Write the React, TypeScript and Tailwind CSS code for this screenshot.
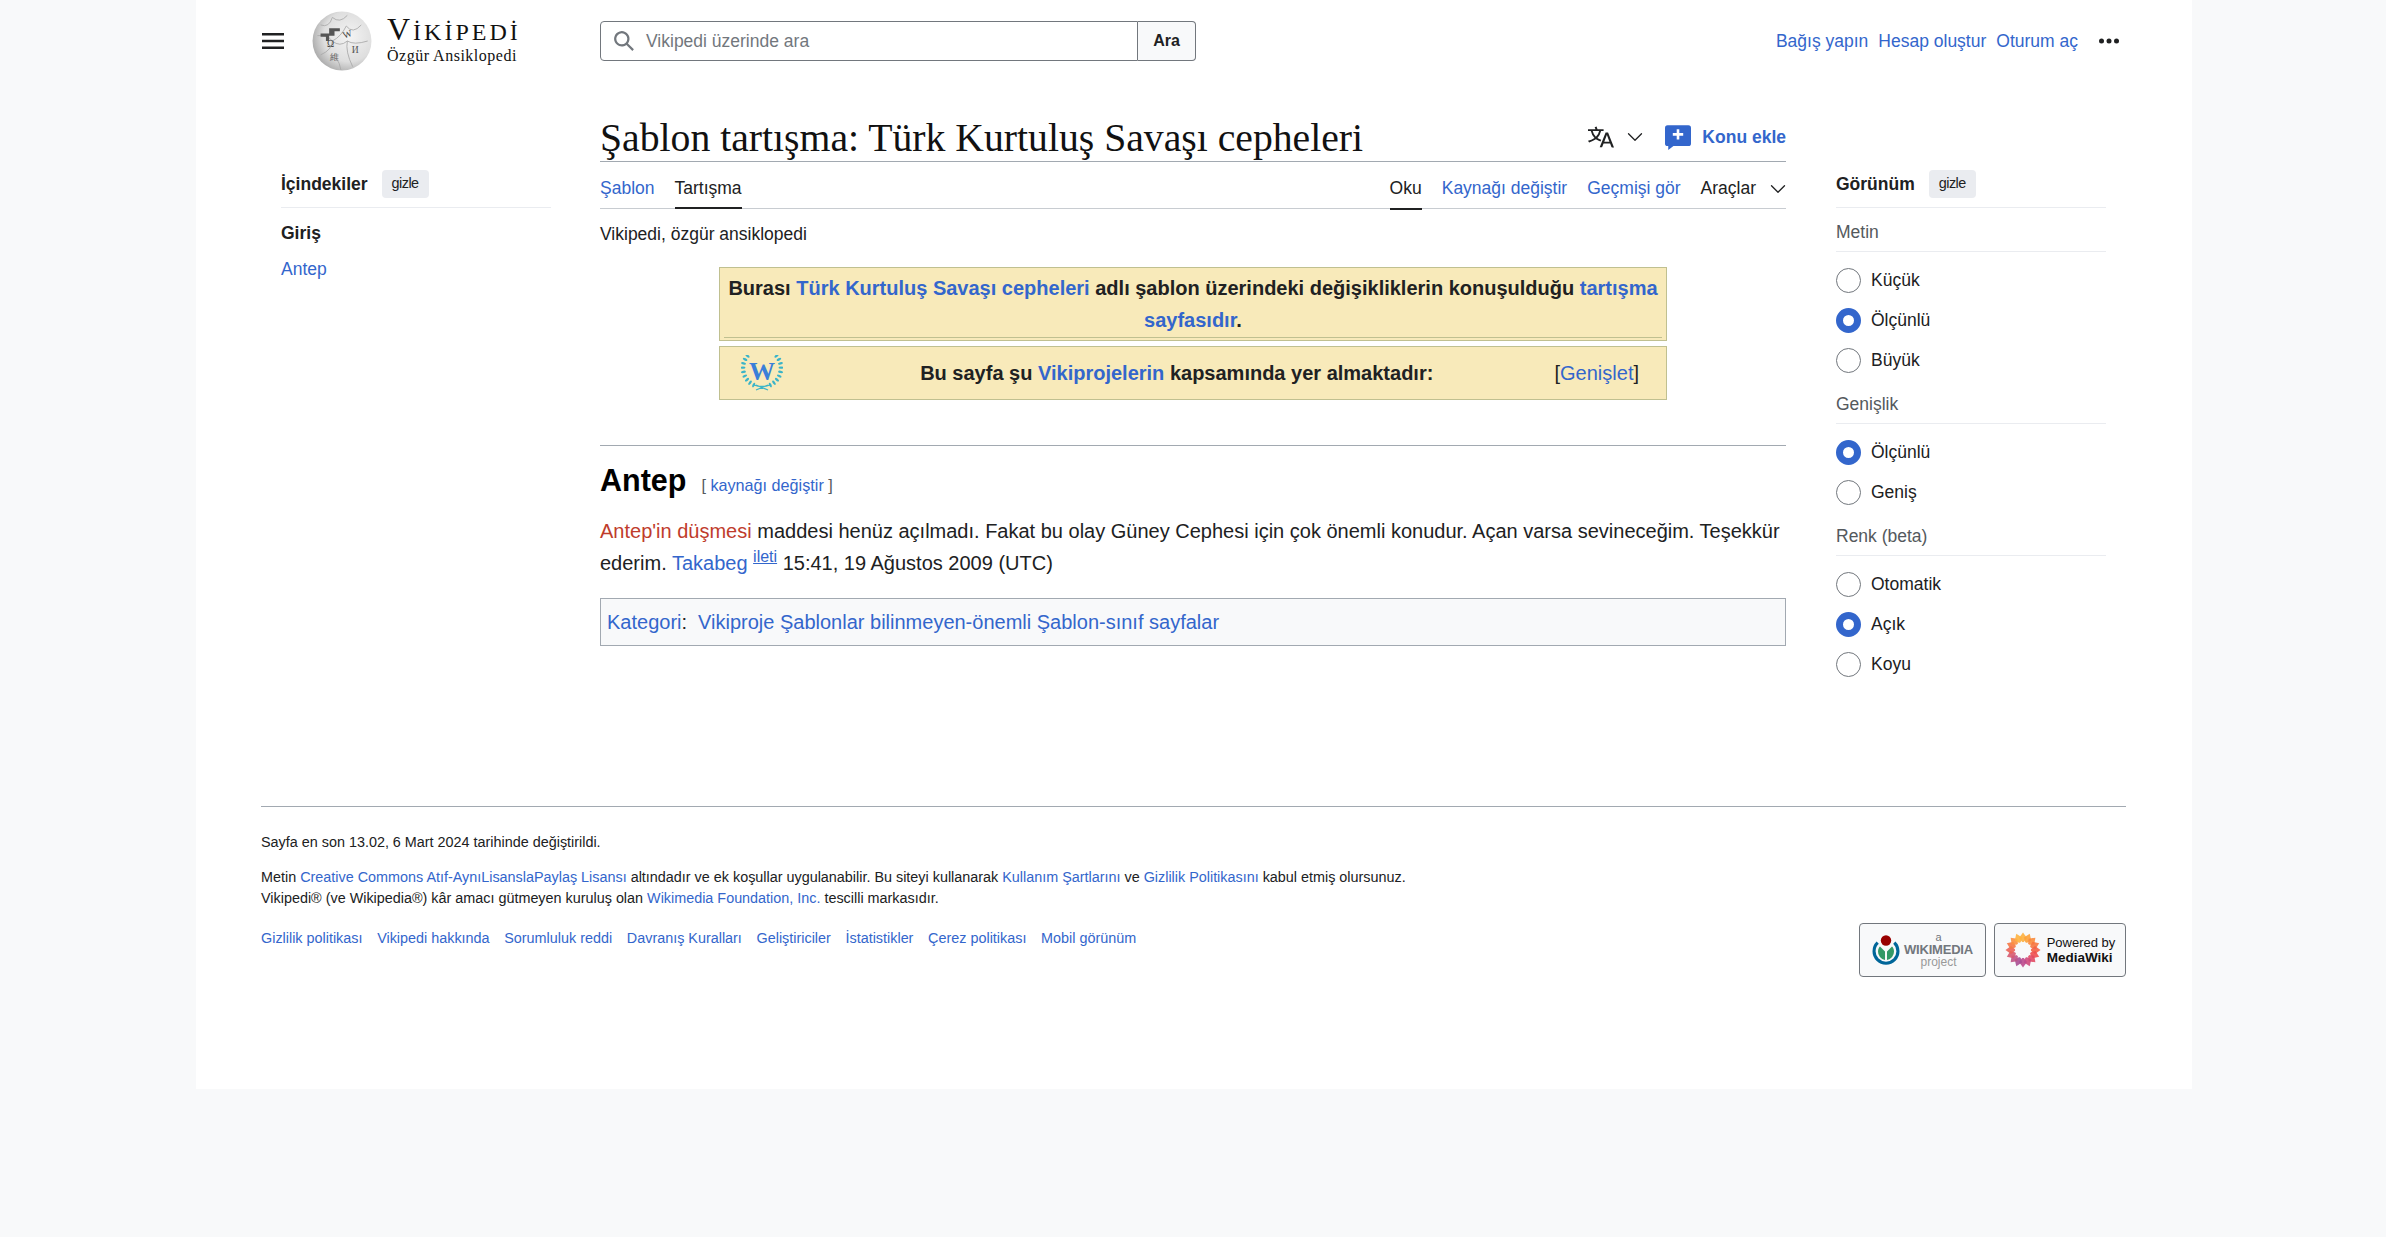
import { ChevronDown } from "lucide-react";

const link = "text-[#3366cc]";

function Globe() {
  const lines = [
    "M8 13 Q16 16 19 6",
    "M19 6 Q26 12 33 4",
    "M5 23 Q14 22 19 28 Q27 24 32 14",
    "M32 14 Q38 22 46 13",
    "M19 28 Q19 36 8 41",
    "M19 28 Q26 34 33 28 Q39 32 52 28",
    "M33 28 Q31 38 38 52",
    "M17 44 Q24 40 27 55",
  ];
  return (
    <svg width="60" height="60" viewBox="0 0 56 56" className="shrink-0">
      <defs>
        <radialGradient id="globe" cx="0.62" cy="0.42" r="0.72">
          <stop offset="0" stopColor="#f4f4f4" />
          <stop offset="0.6" stopColor="#dedede" />
          <stop offset="1" stopColor="#9a9a9a" />
        </radialGradient>
      </defs>
      <circle cx="28" cy="28" r="27.5" fill="url(#globe)" />
      {lines.map((d) => (
        <path key={d} d={d} fill="none" stroke="#a8a8a8" strokeWidth="0.8" />
      ))}
      <path d="M8 21h8v-5h10v3h-5v4h-5v5h-3v-4H8z" fill="#555" />
      <text x="14" y="34" fontSize="9" fontFamily="Liberation Serif" fill="#444">Ω</text>
      <text x="30" y="26" fontSize="9" fontFamily="Liberation Serif" fill="#444" transform="rotate(-20 30 26)">W</text>
      <text x="37" y="39" fontSize="9" fontFamily="Liberation Serif" fill="#555">И</text>
      <text x="17" y="46" fontSize="8" fontFamily="Liberation Serif" fill="#666">維</text>
    </svg>
  );
}

function Laurel() {
  const angles = [140, 153, 166, 179, 192, 205, 218, 231, 244];
  return (
    <svg width="42" height="36" viewBox="0 0 42 36">
      {angles.map((a) => {
        const r = (a * Math.PI) / 180;
        const x = 21 + 19 * Math.cos(r);
        const y = 13 - 19 * Math.sin(r);
        return (
          <g key={a}>
            <ellipse cx={x} cy={y} rx="1.2" ry="2.5" fill="#3ab4c8" transform={`rotate(${90 - a} ${x} ${y})`} />
            <ellipse cx={42 - x} cy={y} rx="1.2" ry="2.5" fill="#3ab4c8" transform={`rotate(${a - 90} ${42 - x} ${y})`} />
          </g>
        );
      })}
      <path d="M13 30 Q21 33 29 30M15 35 L27 30M27 35 L15 30" fill="none" stroke="#3ab4c8" strokeWidth="1.3" />
      <text x="21" y="25" textAnchor="middle" fontSize="26" fontWeight="700" fontFamily="Liberation Serif" fill="#3a7fd9">W</text>
    </svg>
  );
}

function WikimediaMark() {
  return (
    <svg width="28" height="30" viewBox="0 0 28 30" className="shrink-0">
      <circle cx="14" cy="5.5" r="5.2" fill="#990000" />
      <path d="M13 25a8.5 8.5 0 0 1-7-8.5c0-2.5 1-4 2-5l5 5z" fill="#339966" />
      <path d="M15 25a8.5 8.5 0 0 0 7-8.5c0-2.5-1-4-2-5l-5 5z" fill="#339966" />
      <path d="M4.6 6.6A13.5 13.5 0 1 0 23.4 6.6l-2.2 2.2A10.4 10.4 0 1 1 6.8 8.8z" fill="#006699" />
    </svg>
  );
}

function MediaWikiFlower() {
  const colors = ["#fdb03f", "#fca13a", "#f98b3c", "#f6753f", "#f26146", "#ee4f4f", "#e24a63", "#cf4a7c", "#bd4a8d", "#a94e92", "#c05386", "#d65a70", "#ea6356", "#f57845", "#fb9040", "#feb340"];
  return (
    <svg width="36" height="36" viewBox="0 0 36 36" className="shrink-0">
      {colors.map((c, i) => (
        <path
          key={i}
          d="M18 0.5 L22 6 L18 11 L14 6 Z"
          fill={c}
          opacity="0.9"
          transform={`rotate(${(i * 360) / colors.length} 18 18)`}
        />
      ))}
      <circle cx="18" cy="18" r="8" fill="#f8f9fa" />
    </svg>
  );
}

function Radio({ label, checked }: { label: string; checked?: boolean }) {
  return (
    <div className="flex h-[40px] items-center gap-[10px] text-[17.5px] text-[#202122]">
      {checked ? (
        <span className="h-[25px] w-[25px] rounded-full border-[7px] border-[#3366cc] bg-white" />
      ) : (
        <span className="h-[25px] w-[25px] rounded-full border border-[#72777d] bg-white" />
      )}
      <span>{label}</span>
    </div>
  );
}

function RadioGroup({ title, items }: { title: string; items: [string, boolean?][] }) {
  return (
    <div>
      <div className="flex h-[38px] items-center border-b border-[#eaecf0] text-[17.5px] text-[#54595d]">{title}</div>
      <div className="pt-[8px] pb-[6px]">
        {items.map(([label, checked]) => (
          <Radio key={label} label={label} checked={checked} />
        ))}
      </div>
    </div>
  );
}

function SideHeading({ title }: { title: string }) {
  return (
    <div className="flex h-[38px] items-start gap-[14px] border-b border-[#eaecf0]">
      <span className="text-[17.5px] leading-[28px] font-bold text-[#202122]">{title}</span>
      <span className="flex h-[28px] w-[47px] items-center justify-center rounded-sm bg-[#eaecf0] text-[14.4px] tracking-[-0.5px] text-[#202122]">gizle</span>
    </div>
  );
}

export default function App() {
  return (
    <div className="min-h-screen bg-[#f8f9fa] font-['Liberation_Sans',Arial,sans-serif] text-[#202122]">
      <div className="mx-[196px] h-[1089px] w-[1996px] bg-white pl-[65px] pr-[66px]">
        <header className="flex h-[81px] items-start pt-[21px]">
          <div className="flex h-[40px] w-[339px] items-center">
            <svg width="24" height="24" viewBox="0 0 24 24" className="shrink-0" fill="#202122">
              <path d="M1 4h22v2.4H1zM1 10.8h22v2.4H1zM1 17.6h22V20H1z" />
            </svg>
            <div className="ml-[27px] flex items-center gap-[15px]">
              <Globe />
              <div className="-mt-[3px] font-['Liberation_Serif',serif] text-[#111]">
                <div className="text-[24px] leading-[30px] tracking-[3px]">
                  <span className="text-[32px]">V</span>İKİPEDİ
                </div>
                <div className="text-[16px] leading-[18px] tracking-[0.5px]">Özgür Ansiklopedi</div>
              </div>
            </div>
          </div>
          <div className="flex h-[40px] w-[596px]">
            <div className="flex flex-1 items-center gap-[11px] rounded-l-sm border border-[#72777d] pl-[12px]">
              <svg width="22" height="22" viewBox="0 0 20 20" fill="#72777d">
                <path d="M12.2 13.6a7 7 0 1 1 1.4-1.4l5.4 5.4-1.4 1.4zM3 8a5 5 0 1 0 10 0A5 5 0 0 0 3 8" />
              </svg>
              <span className="text-[17.5px] text-[#72777d]">Vikipedi üzerinde ara</span>
            </div>
            <div className="flex w-[58px] items-center justify-center rounded-r-sm border border-l-0 border-[#72777d] bg-[#f8f9fa] text-[16px] font-bold">Ara</div>
          </div>
          <div className="ml-auto flex h-[40px] items-center text-[17.5px]">
            <div className={`flex gap-[10px] ${link}`}>
              <span>Bağış yapın</span>
              <span>Hesap oluştur</span>
              <span>Oturum aç</span>
            </div>
            <svg width="24" height="24" viewBox="0 0 24 24" className="ml-[19px] mr-[5px]" fill="#202122">
              <circle cx="4.5" cy="12" r="2.5" />
              <circle cx="12" cy="12" r="2.5" />
              <circle cx="19.5" cy="12" r="2.5" />
            </svg>
          </div>
        </header>

        <div className="flex h-[725px] items-start">
          <aside className="ml-[20px] mt-[89px] w-[270px]">
            <SideHeading title="İçindekiler" />
            <div className="mt-[7px] text-[17.5px] leading-[36px]">
              <div className="font-bold">Giriş</div>
              <div className={link}>Antep</div>
            </div>
          </aside>

          <main className="ml-[49px] w-[1186px]">
            <div className="flex h-[81px] items-end justify-between border-b border-[#a2a9b1]">
              <h1 className="font-['Liberation_Serif',serif] text-[39.7px] leading-[46px] text-[#111]">Şablon tartışma: Türk Kurtuluş Savaşı cepheleri</h1>
              <div className="mb-[11px] flex items-center">
                <svg width="26" height="26" viewBox="0 0 20 20" fill="#202122">
                  <path d="M20 18h-1.44a.6.6 0 0 1-.4-.12.8.8 0 0 1-.23-.31L17 15h-5l-1 2.54a.8.8 0 0 1-.22.3.6.6 0 0 1-.4.14H9l4.55-11.47h1.89zm-3.53-4.31L14.89 9.5a12 12 0 0 1-.39-1.24q-.09.37-.19.69l-.19.56-1.58 4.19zm-6.3-1.58a13.4 13.4 0 0 1-2.91-1.41 11.46 11.46 0 0 0 2.81-5.37H12V4H7.31a4 4 0 0 0-.2-.56C6.87 2.79 6.6 2 6.6 2l-1.47.5s.4.89.6 1.5H0v1.33h2.15A11.23 11.23 0 0 0 5 10.7a17.2 17.2 0 0 1-5 2.1q.56.82.87 1.38a23.3 23.3 0 0 0 5.22-2.51 15.6 15.6 0 0 0 3.56 1.77zM3.63 5.33h4.91a8.1 8.1 0 0 1-2.45 4.45 9.1 9.1 0 0 1-2.46-4.45" />
                </svg>
                <ChevronDown size={26} className="ml-[8px] text-[#202122]" strokeWidth={1.2} />
                <svg width="26" height="26" viewBox="0 0 20 20" fill="#3366cc" className="ml-[17px]">
                  <path d="M18 1H2a2 2 0 0 0-2 2v12a2 2 0 0 0 2 2h.5v3l4-3H18a2 2 0 0 0 2-2V3a2 2 0 0 0-2-2m-4 8h-3v3H9V9H6V7h3V4h2v3h3z" />
                </svg>
                <span className={`ml-[11px] text-[17.5px] font-bold ${link}`}>Konu ekle</span>
              </div>
            </div>
            <nav className="flex h-[47px] justify-between border-b border-[#c8ccd1] text-[17.5px]">
              <div className="flex gap-[20px]">
                <span className={`flex items-center pt-[7px] ${link}`}>Şablon</span>
                <span className="-mb-px flex items-center border-b-2 border-[#202122] pt-[7px]">Tartışma</span>
              </div>
              <div className="flex items-center gap-[20px]">
                <span className="-mb-px flex h-[48px] items-center border-b-2 border-[#202122] pt-[7px]">Oku</span>
                <span className={`pt-[7px] ${link}`}>Kaynağı değiştir</span>
                <span className={`pt-[7px] ${link}`}>Geçmişi gör</span>
                <span className="flex items-center gap-[9px] pt-[7px]">
                  Araçlar
                  <ChevronDown size={26} strokeWidth={1.2} className="-mr-[5px]" />
                </span>
              </div>
            </nav>

            <div className="mt-[13px] text-[17.5px] leading-[24px]">Vikipedi, özgür ansiklopedi</div>

            <div className="mx-[119px] mt-[21px] border border-[#c0c090] bg-[#f8eaba] px-[4px] pt-[4px] pb-[2px] text-center text-[20px] font-bold">
              <div className="border-b border-[#c0c090] pb-[1px] leading-[32px]">
                Burası <span className={link}>Türk Kurtuluş Savaşı cepheleri</span> adlı şablon üzerindeki değişikliklerin konuşulduğu{" "}
                <span className={link}>tartışma sayfasıdır</span>.
              </div>
            </div>
            <div className="mx-[119px] mt-[5px] flex h-[54px] items-center border border-[#c0c090] bg-[#f8eaba] pl-[21px] pr-[27px] text-[20px]">
              <Laurel />
              <div className="flex-1 pl-[16px] text-center font-bold">
                Bu sayfa şu <span className={link}>Vikiprojelerin</span> kapsamında yer almaktadır:
              </div>
              <div>
                [<span className={link}>Genişlet</span>]
              </div>
            </div>

            <div className="mt-[45px] border-t border-[#a2a9b1] pt-[12px]">
              <h2 className="flex items-baseline text-[30.5px] leading-[44px] font-bold text-black">
                Antep
                <span className="ml-[15px] text-[16.2px] font-normal text-[#54595d]">
                  [ <span className={link}>kaynağı değiştir</span> ]
                </span>
              </h2>
            </div>
            <p className="mt-[8px] text-[20px] leading-[32px]">
              <span className="text-[#bf3c2c]">Antep'in düşmesi</span> maddesi henüz açılmadı. Fakat bu olay Güney Cephesi için çok önemli konudur. Açan varsa sevineceğim. Teşekkür ederim. <span className={link}>Takabeg</span>{" "}
              <sup className={`text-[16px] underline ${link}`}>ileti</sup> 15:41, 19 Ağustos 2009 (UTC)
            </p>
            <div className="mt-[19px] flex h-[48px] items-center border border-[#a2a9b1] bg-[#f8f9fa] px-[6px] text-[20px]">
              <span className={link}>Kategori</span>:
              <span className={`ml-[11px] ${link}`}>Vikiproje Şablonlar bilinmeyen-önemli Şablon-sınıf sayfalar</span>
            </div>
          </main>

          <aside className="ml-[50px] mt-[89px] w-[270px]">
            <SideHeading title="Görünüm" />
            <div className="mt-[6px]">
              <RadioGroup title="Metin" items={[["Küçük"], ["Ölçünlü", true], ["Büyük"]]} />
              <RadioGroup title="Genişlik" items={[["Ölçünlü", true], ["Geniş"]]} />
              <RadioGroup title="Renk (beta)" items={[["Otomatik"], ["Açık", true], ["Koyu"]]} />
            </div>
          </aside>
        </div>

        <footer className="border-t border-[#a2a9b1] pt-[25px] text-[14.38px] leading-[21px]">
          <div>Sayfa en son 13.02, 6 Mart 2024 tarihinde değiştirildi.</div>
          <div className="mt-[14px]">
            Metin <span className={link}>Creative Commons Atıf-AynıLisanslaPaylaş Lisansı</span> altındadır ve ek koşullar uygulanabilir. Bu siteyi kullanarak <span className={link}>Kullanım Şartlarını</span> ve <span className={link}>Gizlilik Politikasını</span> kabul etmiş olursunuz.
          </div>
          <div>
            Vikipedi® (ve Wikipedia®) kâr amacı gütmeyen kuruluş olan <span className={link}>Wikimedia Foundation, Inc.</span> tescilli markasıdır.
          </div>
          <div className="flex items-start justify-between">
            <div className={`mt-[19px] flex gap-[14.7px] ${link}`}>
              <span>Gizlilik politikası</span>
              <span>Vikipedi hakkında</span>
              <span>Sorumluluk reddi</span>
              <span>Davranış Kuralları</span>
              <span>Geliştiriciler</span>
              <span>İstatistikler</span>
              <span>Çerez politikası</span>
              <span>Mobil görünüm</span>
            </div>
            <div className="mt-[14px] flex gap-[8px]">
              <div className="flex h-[54px] w-[127px] items-center justify-center gap-[4px] rounded-sm border border-[#72777d] bg-[#f8f9fa]">
                <WikimediaMark />
                <div className="text-center leading-none text-[#72777d]">
                  <div className="text-[11px]">a</div>
                  <div className="text-[13px] font-bold tracking-[-0.2px]">WIKIMEDIA</div>
                  <div className="text-[12px] text-[#999]">project</div>
                </div>
              </div>
              <div className="flex h-[54px] w-[132px] items-center justify-center gap-[6px] rounded-sm border border-[#72777d] bg-[#f8f9fa]">
                <MediaWikiFlower />
                <div className="text-[13px] leading-[15px] text-[#111]">
                  <div>Powered by</div>
                  <div className="text-[13.5px] font-bold">MediaWiki</div>
                </div>
              </div>
            </div>
          </div>
        </footer>
      </div>
    </div>
  );
}
